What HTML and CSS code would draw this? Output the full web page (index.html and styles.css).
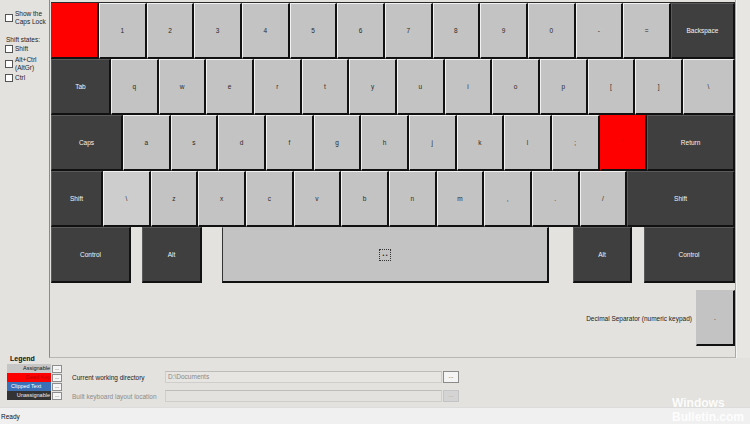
FILE: index.html
```html
<!DOCTYPE html>
<html>
<head>
<meta charset="utf-8">
<link rel="stylesheet" href="styles.css">
</head>
<body>
<div class="app">
  <div class="main">
    <div class="side">
      <div class="chk chk-caps">
        <span class="box"></span>
        <span class="lbl">Show the<br>Caps Lock</span>
      </div>
      <div class="states">Shift states:</div>
      <div class="chk chk-shift"><span class="box"></span><span class="lbl">Shift</span></div>
      <div class="chk chk-alt"><span class="box"></span><span class="lbl">Alt+Ctrl<br>(AltGr)</span></div>
      <div class="chk chk-ctrl"><span class="box"></span><span class="lbl">Ctrl</span></div>
    </div>
    <div class="panel">
      <div class="rows">
        <div class="row">
          <div class="key red w48"></div>
          <div class="key u">1</div><div class="key u">2</div><div class="key u">3</div><div class="key u">4</div>
          <div class="key u">5</div><div class="key u">6</div><div class="key u">7</div><div class="key u">8</div>
          <div class="key u">9</div><div class="key u">0</div><div class="key u">-</div><div class="key u">=</div>
          <div class="key dark grow">Backspace</div>
        </div>
        <div class="row">
          <div class="key dark w60">Tab</div>
          <div class="key u">q</div><div class="key u">w</div><div class="key u">e</div><div class="key u">r</div>
          <div class="key u">t</div><div class="key u">y</div><div class="key u">u</div><div class="key u">i</div>
          <div class="key u">o</div><div class="key u">p</div><div class="key u">[</div><div class="key u">]</div>
          <div class="key grow">\</div>
        </div>
        <div class="row">
          <div class="key dark w72">Caps</div>
          <div class="key u">a</div><div class="key u">s</div><div class="key u">d</div><div class="key u">f</div>
          <div class="key u">g</div><div class="key u">h</div><div class="key u">j</div><div class="key u">k</div>
          <div class="key u">l</div><div class="key u">;</div><div class="key u red faint">'</div>
          <div class="key dark grow">Return</div>
        </div>
        <div class="row">
          <div class="key dark w52">Shift</div>
          <div class="key u light">\</div><div class="key u">z</div><div class="key u">x</div><div class="key u">c</div>
          <div class="key u">v</div><div class="key u">b</div><div class="key u">n</div><div class="key u">m</div>
          <div class="key u">,</div><div class="key u">.</div><div class="key u">/</div>
          <div class="key dark grow">Shift</div>
        </div>
        <div class="row row5">
          <div class="key dark w80">Control</div>
          <div class="gap g11"></div>
          <div class="key dark w60">Alt</div>
          <div class="gap g20"></div>
          <div class="key space"><span class="focus">• •</span></div>
          <div class="gap g24"></div>
          <div class="key dark w59">Alt</div>
          <div class="gap g12"></div>
          <div class="key dark grow">Control</div>
        </div>
      </div>
      <div class="decimal">
        <span class="dec-label">Decimal Separator (numeric keypad)</span>
        <div class="key dec">.</div>
      </div>
    </div>
    <div class="strip"></div>
  </div>
  <div class="bottom">
    <div class="legend">
      <div class="legend-title">Legend</div>
      <div class="leg-item"><span class="bar b-assign">Assignable</span><span class="dots">...</span></div>
      <div class="leg-item"><span class="bar b-dead">Dead Key</span><span class="dots">...</span></div>
      <div class="leg-item"><span class="bar b-clip">Clipped Text</span><span class="dots">...</span></div>
      <div class="leg-item"><span class="bar b-unas">Unassignable</span><span class="dots">...</span></div>
    </div>
    <div class="form">
      <div class="frow">
        <span class="flabel">Current working directory</span>
        <span class="field">D:\Documents</span>
        <span class="fbtn">...</span>
      </div>
      <div class="frow disabled">
        <span class="flabel">Built keyboard layout location</span>
        <span class="field"></span>
        <span class="fbtn">...</span>
      </div>
    </div>
  </div>
  <div class="status">
    <span class="ready">Ready</span>
  </div>
  <div class="watermark">Windows<br>Bulletin.com</div>
</div>
</body>
</html>
```
FILE: styles.css
```css
* { box-sizing: border-box; }
html, body { margin: 0; padding: 0; }
body {
  width: 750px;
  height: 424px;
  overflow: hidden;
  background: #e3e2de;
  font-family: "Liberation Sans", Arial, sans-serif;
  font-size: 6.5px;
  color: #1e1e1e;
}
.app { position: relative; width: 750px; height: 424px; display: flex; flex-direction: column; }
.main { display: flex; height: 358px; }

/* side panel */
.side { width: 49px; padding: 10px 0 0 5px; }
.chk { display: flex; align-items: center; gap: 2px; }
.box { width: 8px; height: 8px; border: 1px solid #555; background: #fff; flex: none; }
.lbl { line-height: 7.5px; }
.states { margin-top: 11px; padding-left: 1px; line-height: 7px; }
.chk-shift { margin-top: 2px; }
.chk-alt { margin-top: 3px; }
.chk-ctrl { margin-top: 3px; }

/* keyboard panel */
.panel {
  width: 687px;
  border-left: 1px solid #8c8b87;
  border-right: 1px solid #a9a8a4;
  border-bottom: 1px solid #b8b7b3;
  padding: 2px 0 0 1px;
}
.rows { border-top: 1px solid #2a2a2a; }
.row { display: flex; height: 56px; }
.key {
  height: 56px;
  display: flex;
  align-items: center;
  justify-content: center;
  background: #c3c3c3;
  border-top: 1px solid #f2f2f2;
  border-left: 1px solid #f2f2f2;
  border-right: 2px solid #111;
  border-bottom: 2px solid #111;
  color: #2a2a2a;
  flex: none;
}
.key.u { width: 47.67px; }
.w48 { width: 48px; }
.w52 { width: 52px; }
.w59 { width: 59px; }
.w60 { width: 60px; }
.w72 { width: 72px; }
.w80 { width: 80px; }
.key.grow { flex: 1; }
.key.red { background: #ff0000; border-top-color: #ff0000; border-left-color: #ff0000; color: #c00000; }
.key.dark { background: #3f3f3f; color: #f4f4f4; border-top-color: #5a5a5a; border-left-color: #5a5a5a; }
.key.light { background: #cdcdcd; }
.gap { flex: none; height: 56px; }
.g11 { width: 11px; }
.g20 { width: 20px; }
.g24 { width: 24px; }
.g12 { width: 12px; }
.key.space { width: 327px; border-top-color: #c3c3c3; border-left-color: #333; border-left-width: 1px; }
.focus {
  width: 12px; height: 12px;
  border: 1px dotted #333;
  display: flex; align-items: center; justify-content: center;
  font-size: 5px; color: #222;
}

.decimal {
  margin-top: 7px;
  height: 56px;
  display: flex;
  justify-content: flex-end;
  align-items: center;
  gap: 4px;
}
.key.dec { width: 39px; height: 56px; border-top-color: #c3c3c3; border-left-color: #c3c3c3; }
.dec-label { color: #222; }

.strip { flex: 1; background: #e7e6e2; border-left: 1px solid #f4f4f2; }

/* bottom */
.bottom { height: 49px; display: flex; }
.legend { width: 64px; padding-left: 7px; }
.legend-title { margin-top: -3px; height: 9px; padding-left: 3px; font-weight: bold; font-size: 7px; line-height: 7px; color: #111; }
.leg-item { display: flex; align-items: center; height: 9px; }
.bar {
  width: 44px; height: 9px; line-height: 9px;
  font-size: 5.5px; text-align: right; padding-right: 1px;
  overflow: hidden; white-space: nowrap;
}
.b-assign { background: #c6c6c6; color: #111; }
.b-dead { background: #ff0000; color: #b40000; }
.b-clip { background: #3b6fb6; color: #fff; text-align: left; padding-left: 4px; }
.b-unas { background: #333; color: #eee; }
.dots {
  margin-left: 1px; width: 10px; height: 8px;
  border: 1px solid #8d8d8d; background: #f5f5f5;
  font-size: 5px; line-height: 5px; text-align: center; color: #222;
}
.form { margin-left: 8px; padding-top: 13px; }
.frow { display: flex; align-items: center; height: 12px; }
.frow + .frow { margin-top: 7px; }
.flabel { width: 93px; color: #222; }
.field {
  width: 277px; height: 12px;
  border: 1px solid #cfceca;
  border-top-color: #bdbcb8;
  background: #e6e5e1;
  color: #8a8a8a;
  padding-left: 2px;
  line-height: 10px;
}
.fbtn {
  margin-left: 1px; width: 16px; height: 12px;
  border: 1px solid #8a8a8a; background: #f4f4f4;
  text-align: center; font-size: 6px; line-height: 8px; color: #222;
}
.disabled .flabel { color: #8c8c8c; }
.disabled .field { background: #e3e2de; }
.disabled .fbtn { background: #d4d4d4; border-color: #c4c4c4; color: #999; }

/* status */
.status {
  height: 17px;
  background: #f0f0f0;
  border-top: 1px solid #dcdcdc;
  display: flex;
  align-items: center;
}
.ready { padding-left: 1px; color: #111; }

.watermark {
  position: absolute;
  left: 672px;
  top: 396px;
  font-family: "Liberation Sans", Arial, sans-serif;
  font-weight: bold;
  font-size: 12px;
  line-height: 14px;
  color: rgba(255,255,255,0.9);
}
```
